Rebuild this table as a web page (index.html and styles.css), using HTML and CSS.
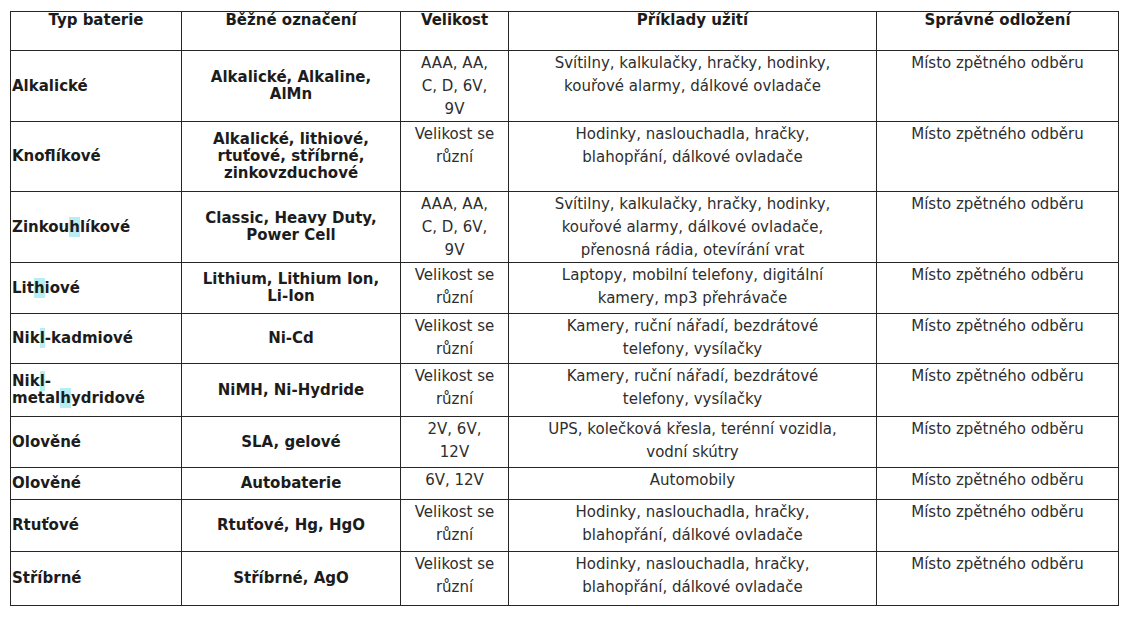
FILE: index.html
```html
<!DOCTYPE html>
<html lang="cs">
<head>
<meta charset="utf-8">
<title>Baterie</title>
<link rel="stylesheet" href="styles.css">
</head>
<body>
<table class="bat">
  <colgroup>
    <col class="c1"><col class="c2"><col class="c3"><col class="c4"><col class="c5">
  </colgroup>
  <thead>
    <tr class="h-head">
      <th>Typ baterie</th>
      <th>Běžné označení</th>
      <th>Velikost</th>
      <th>Příklady užití</th>
      <th>Správné odložení</th>
    </tr>
  </thead>
  <tbody>
    <tr class="h71">
      <td class="type">Alkalické</td>
      <td class="name">Alkalické, Alkaline,<br>AlMn</td>
      <td class="size">AAA, AA,<br>C, D, 6V,<br>9V</td>
      <td class="use">Svítilny, kalkulačky, hračky, hodinky,<br>kouřové alarmy, dálkové ovladače</td>
      <td class="disp">Místo zpětného odběru</td>
    </tr>
    <tr class="h70">
      <td class="type">Knoflíkové</td>
      <td class="name">Alkalické, lithiové,<br>rtuťové, stříbrné,<br>zinkovzduchové</td>
      <td class="size">Velikost se<br>různí</td>
      <td class="use">Hodinky, naslouchadla, hračky,<br>blahopřání, dálkové ovladače</td>
      <td class="disp">Místo zpětného odběru</td>
    </tr>
    <tr class="h71">
      <td class="type">Zinkou<span class="hl">h</span>líkové</td>
      <td class="name">Classic, Heavy Duty,<br>Power Cell</td>
      <td class="size">AAA, AA,<br>C, D, 6V,<br>9V</td>
      <td class="use">Svítilny, kalkulačky, hračky, hodinky,<br>kouřové alarmy, dálkové ovladače,<br>přenosná rádia, otevírání vrat</td>
      <td class="disp">Místo zpětného odběru</td>
    </tr>
    <tr class="h51">
      <td class="type">Lit<span class="hl">h</span>iové</td>
      <td class="name">Lithium, Lithium Ion,<br>Li-Ion</td>
      <td class="size">Velikost se<br>různí</td>
      <td class="use">Laptopy, mobilní telefony, digitální<br>kamery, mp3 přehrávače</td>
      <td class="disp">Místo zpětného odběru</td>
    </tr>
    <tr class="h50">
      <td class="type">Nik<span class="hl">l</span>-kadmiové</td>
      <td class="name">Ni-Cd</td>
      <td class="size">Velikost se<br>různí</td>
      <td class="use">Kamery, ruční nářadí, bezdrátové<br>telefony, vysílačky</td>
      <td class="disp">Místo zpětného odběru</td>
    </tr>
    <tr class="h53">
      <td class="type">Nik<span class="hl">l</span>-<br>metal<span class="hl">h</span>ydridové</td>
      <td class="name">NiMH, Ni-Hydride</td>
      <td class="size">Velikost se<br>různí</td>
      <td class="use">Kamery, ruční nářadí, bezdrátové<br>telefony, vysílačky</td>
      <td class="disp">Místo zpětného odběru</td>
    </tr>
    <tr class="h51">
      <td class="type">Olověné</td>
      <td class="name">SLA, gelové</td>
      <td class="size">2V, 6V,<br>12V</td>
      <td class="use">UPS, kolečková křesla, terénní vozidla,<br>vodní skútry</td>
      <td class="disp">Místo zpětného odběru</td>
    </tr>
    <tr class="h32">
      <td class="type">Olověné</td>
      <td class="name">Autobaterie</td>
      <td class="size">6V, 12V</td>
      <td class="use">Automobily</td>
      <td class="disp">Místo zpětného odběru</td>
    </tr>
    <tr class="h52">
      <td class="type">Rtuťové</td>
      <td class="name">Rtuťové, Hg, HgO</td>
      <td class="size">Velikost se<br>různí</td>
      <td class="use">Hodinky, naslouchadla, hračky,<br>blahopřání, dálkové ovladače</td>
      <td class="disp">Místo zpětného odběru</td>
    </tr>
    <tr class="h54">
      <td class="type">Stříbrné</td>
      <td class="name">Stříbrné, AgO</td>
      <td class="size">Velikost se<br>různí</td>
      <td class="use">Hodinky, naslouchadla, hračky,<br>blahopřání, dálkové ovladače</td>
      <td class="disp">Místo zpětného odběru</td>
    </tr>
  </tbody>
</table>
</body>
</html>
```

FILE: styles.css
```css
html, body {
  margin: 0;
  background: #ffffff;
}
body {
  padding: 11px 0 0 10px;
  font-family: "DejaVu Sans", Verdana, sans-serif;
  font-size: 15px;
  color: #2e2e2e;
}
.bat {
  border-collapse: collapse;
  table-layout: fixed;
  width: 1108px;
  border: 1px solid #262626;
}
.c1 { width: 171px; }
.c2 { width: 219px; }
.c3 { width: 108px; }
.c4 { width: 368px; }
.c5 { width: 242px; }

.bat th, .bat td {
  border: 1px solid #262626;
  padding: 0 2px;
  overflow: hidden;
}
.bat th {
  font-weight: bold;
  vertical-align: top;
  text-align: center;
  line-height: 17px;
  padding-top: 0;
  color: #1c1c1c;
}
.h-head { height: 39px; }
.h71 { height: 71px; }
.h70 { height: 70px; }
.h54 { height: 54px; }
.h53 { height: 53px; }
.h52 { height: 52px; }
.h51 { height: 51px; }
.h50 { height: 50px; }
.h32 { height: 32px; }

.type {
  font-weight: bold;
  text-align: left;
  vertical-align: middle;
  line-height: 17px;
  color: #1c1c1c;
}
.bat td.type {
  padding-left: 1px;
}
.name {
  font-weight: bold;
  text-align: center;
  vertical-align: middle;
  line-height: 17px;
  color: #1c1c1c;
}
.bat td.size, .bat td.use, .bat td.disp {
  text-align: center;
  vertical-align: top;
  line-height: 23px;
  padding-top: 1px;
}
.hl {
  background: #b6eef4;
  padding: 1px 0;
}
```
